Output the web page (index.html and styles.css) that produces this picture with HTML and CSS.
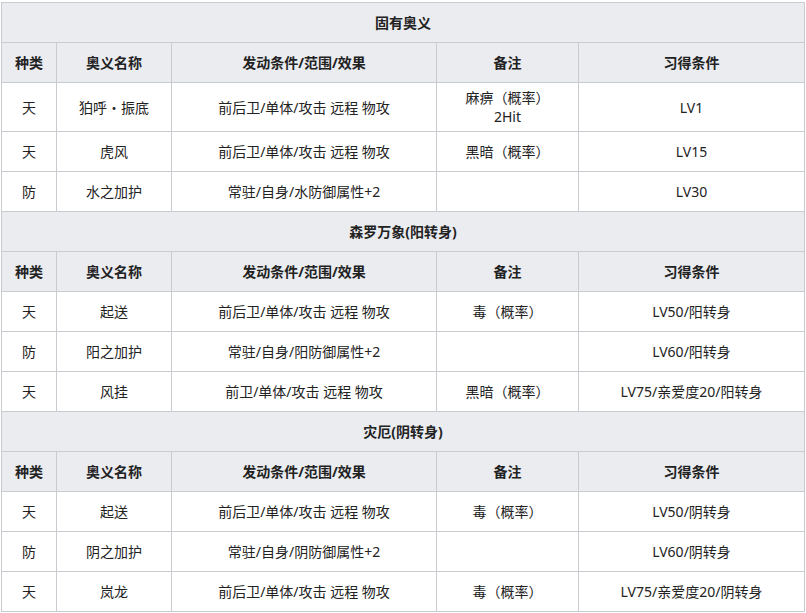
FILE: index.html
```html
<!DOCTYPE html>
<html lang="zh">
<head>
<meta charset="utf-8">
<link rel="stylesheet" href="styles.css">
</head>
<body>
<table class="skills">
  <colgroup>
    <col class="c-type"><col class="c-name"><col class="c-effect"><col class="c-note"><col class="c-cond">
  </colgroup>
  <tbody>
    <tr class="title"><th colspan="5">固有奥义</th></tr>
    <tr class="head"><th>种类</th><th>奥义名称</th><th>发动条件/范围/效果</th><th>备注</th><th>习得条件</th></tr>
    <tr><td>天</td><td>狛呼・振底</td><td>前后卫/单体/攻击 远程 物攻</td><td>麻痹（概率）<br>2Hit</td><td>LV1</td></tr>
    <tr><td>天</td><td>虎风</td><td>前后卫/单体/攻击 远程 物攻</td><td>黑暗（概率）</td><td>LV15</td></tr>
    <tr><td>防</td><td>水之加护</td><td>常驻/自身/水防御属性+2</td><td></td><td>LV30</td></tr>

    <tr class="title"><th colspan="5">森罗万象(阳转身)</th></tr>
    <tr class="head"><th>种类</th><th>奥义名称</th><th>发动条件/范围/效果</th><th>备注</th><th>习得条件</th></tr>
    <tr><td>天</td><td>起送</td><td>前后卫/单体/攻击 远程 物攻</td><td>毒（概率）</td><td>LV50/阳转身</td></tr>
    <tr><td>防</td><td>阳之加护</td><td>常驻/自身/阳防御属性+2</td><td></td><td>LV60/阳转身</td></tr>
    <tr><td>天</td><td>风挂</td><td>前卫/单体/攻击 远程 物攻</td><td>黑暗（概率）</td><td>LV75/亲爱度20/阳转身</td></tr>

    <tr class="title"><th colspan="5">灾厄(阴转身)</th></tr>
    <tr class="head"><th>种类</th><th>奥义名称</th><th>发动条件/范围/效果</th><th>备注</th><th>习得条件</th></tr>
    <tr><td>天</td><td>起送</td><td>前后卫/单体/攻击 远程 物攻</td><td>毒（概率）</td><td>LV50/阴转身</td></tr>
    <tr><td>防</td><td>阴之加护</td><td>常驻/自身/阴防御属性+2</td><td></td><td>LV60/阴转身</td></tr>
    <tr><td>天</td><td>岚龙</td><td>前后卫/单体/攻击 远程 物攻</td><td>毒（概率）</td><td>LV75/亲爱度20/阴转身</td></tr>
  </tbody>
</table>
</body>
</html>
```

FILE: styles.css
```css
html, body {
  margin: 0;
  padding: 0;
  background: #ffffff;
}

body {
  padding: 2px 0 0 1px;
  font-family: "Noto Sans", "Noto Sans CJK SC", sans-serif;
  font-size: 14px;
  color: #222222;
}

.skills {
  border-collapse: collapse;
  table-layout: fixed;
  width: 803px;
  background: #ffffff;
}

.c-type { width: 55px; }
.c-name { width: 115px; }
.c-effect { width: 265px; }
.c-note { width: 142px; }
.c-cond { width: 226px; }

.skills th,
.skills td {
  border: 1px solid #c8ccd1;
  text-align: center;
  vertical-align: middle;
  padding: 5px 6px;
  line-height: 19px;
  white-space: nowrap;
}

.skills tr {
  height: 40px;
}

.skills th {
  background: #eaecf0;
  font-weight: bold;
  color: #222222;
}
```
